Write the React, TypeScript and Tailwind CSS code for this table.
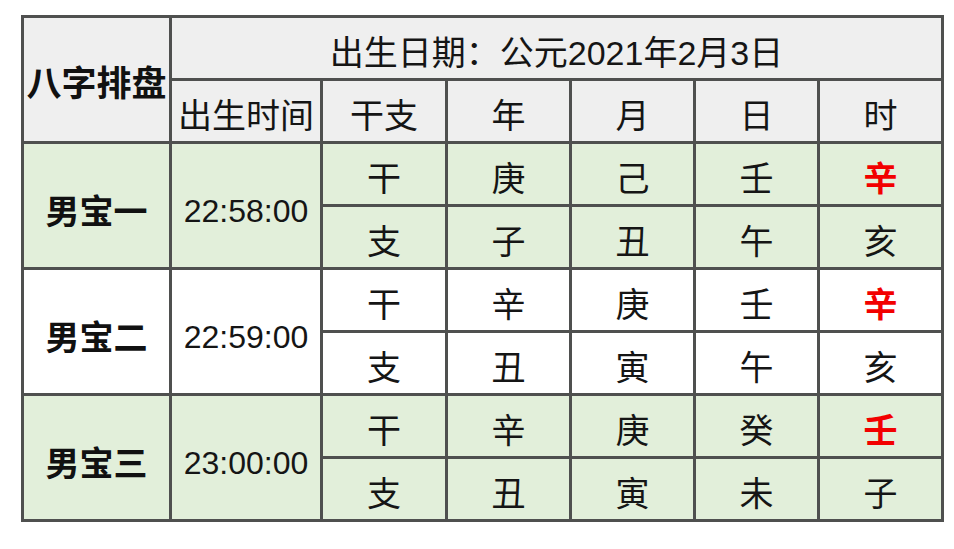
const font = { fontFamily: '"Liberation Sans", "Noto Sans CJK SC", sans-serif' };

type Group = { name: string; time: string; bg: string; gan: string[]; zhi: string[] };

const groups: Group[] = [
  { name: '男宝一', time: '22:58:00', bg: 'bg-[#e2efda]', gan: ['庚', '己', '壬', '辛'], zhi: ['子', '丑', '午', '亥'] },
  { name: '男宝二', time: '22:59:00', bg: 'bg-white', gan: ['辛', '庚', '壬', '辛'], zhi: ['丑', '寅', '午', '亥'] },
  { name: '男宝三', time: '23:00:00', bg: 'bg-[#e2efda]', gan: ['辛', '庚', '癸', '壬'], zhi: ['丑', '寅', '未', '子'] },
];

const cell = 'flex items-center justify-center pt-[10px] text-[34px] leading-none text-[#151515]';

export default function App() {
  return (
    <div className="w-[954px] h-[549px] bg-white pt-[15px] pl-[21px]" style={font}>
      <div className="inline-grid grid-cols-[145px_148px_122px_121px_121px_121px_121px] grid-rows-[60px_60px_repeat(6,60px)] gap-[3px] p-[3px] bg-[#4f504f]">
        <div className="row-span-2 flex items-center justify-center pt-[8px] bg-[#efefef] text-[35px] leading-none font-bold text-[#111]">八字排盘</div>
        <div className={`col-span-6 bg-[#efefef] ${cell}`}>出生日期：公元2021年2月3日</div>
        {['出生时间', '干支', '年', '月', '日', '时'].map((h) => (
          <div key={h} className={`bg-[#efefef] ${cell}`}>{h}</div>
        ))}
        {groups.map((g) => (
          <>
            <div key={g.name} className={`row-span-2 ${g.bg} flex items-center justify-center pt-[12px] text-[34px] leading-none font-bold text-[#111]`}>{g.name}</div>
            <div key={g.time} className={`row-span-2 ${g.bg} ${cell} !text-[32px]`}>{g.time}</div>
            <div className={`${g.bg} ${cell}`}>干</div>
            {g.gan.map((c, i) => (
              <div key={'g' + i} className={`${g.bg} ${cell} ${i === 3 ? 'font-bold !text-[#f20000]' : ''}`}>{c}</div>
            ))}
            <div className={`${g.bg} ${cell}`}>支</div>
            {g.zhi.map((c, i) => (
              <div key={'z' + i} className={`${g.bg} ${cell}`}>{c}</div>
            ))}
          </>
        ))}
      </div>
    </div>
  );
}
